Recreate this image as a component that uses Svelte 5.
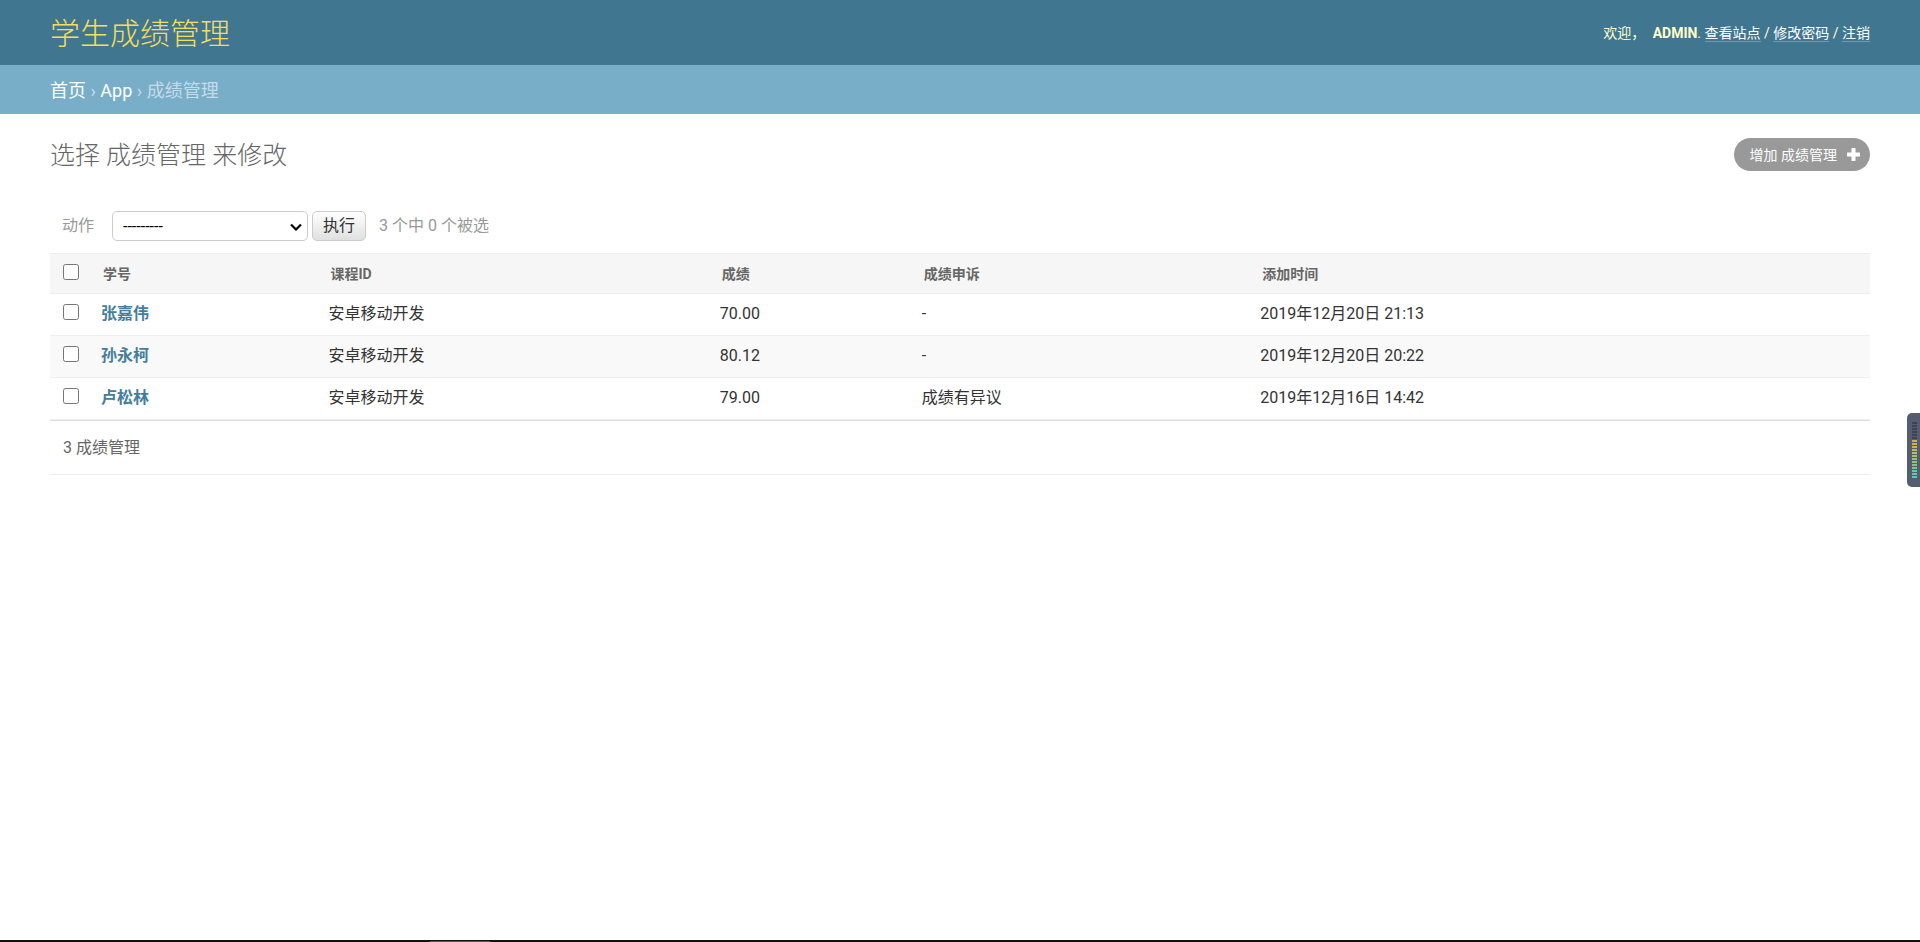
<script>
    const columns = ['学号', '课程ID', '成绩', '成绩申诉', '添加时间'];

    const rows = [
        { name: '张嘉伟', course: '安卓移动开发', score: '70.00', appeal: '-', added: '2019年12月20日 21:13' },
        { name: '孙永柯', course: '安卓移动开发', score: '80.12', appeal: '-', added: '2019年12月20日 20:22' },
        { name: '卢松林', course: '安卓移动开发', score: '79.00', appeal: '成绩有异议', added: '2019年12月16日 14:42' }
    ];

    let checked = $state(rows.map(() => false));
    let selected = $derived(checked.filter(Boolean).length);

    // Level meter, top to bottom
    const levels = [
        '#3d4355', '#3d4355', '#3d4355', '#3d4355', '#3d4355', '#3d4355',
        '#d9ad3c', '#d2b244', '#ccb64a', '#c0bd50', '#b4c256', '#a6c55f', '#98c66b',
        '#8ac776', '#7cc883', '#70c991', '#64caa0', '#58cbb0', '#4fccbd'
    ];

    function toggleAll(event) {
        checked = rows.map(() => event.target.checked);
    }
</script>

<header>
    <h1><a href="#home">学生成绩管理</a></h1>
    <div class="user-tools">
        欢迎，
        <strong>ADMIN</strong>.
        <a href="#site">查看站点</a> /
        <a href="#password">修改密码</a> /
        <a href="#logout">注销</a>
    </div>
</header>

<nav class="breadcrumbs">
    <a href="#home">首页</a> › <a href="#app">App</a> › 成绩管理
</nav>

<main>
    <div class="title-row">
        <h2>选择 成绩管理 来修改</h2>
        <a class="add-link" href="#add">
            增加 成绩管理
            <svg width="13" height="13" viewBox="0 0 13 13" aria-hidden="true">
                <path d="M5 0h3q.5 0 .5.5v4h4q.5 0 .5.5v3q0 .5-.5.5h-4v4q0 .5-.5.5H5q-.5 0-.5-.5v-4h-4Q0 8.500 0 8V5q0-.5.5-.5h4v-4Q4.500 0 5 0z" fill="#fff" />
            </svg>
        </a>
    </div>

    <form onsubmit={(event) => event.preventDefault()}>
        <div class="actions">
            <label for="action">动作</label>
            <div class="select">
                <select id="action">
                    <option value="">---------</option>
                    <option value="delete">删除所选的 成绩管理</option>
                </select>
                <svg width="12" height="8" viewBox="0 0 12 8" aria-hidden="true">
                    <path d="M1 1.500l5 5 5-5" fill="none" stroke="#000" stroke-width="2.200" />
                </svg>
            </div>
            <button type="submit">执行</button>
            <span class="counter">{rows.length} 个中 {selected} 个被选</span>
        </div>

        <table>
            <colgroup>
                <col class="col-check" />
                <col class="col-name" />
                <col class="col-course" />
                <col class="col-score" />
                <col class="col-appeal" />
                <col />
            </colgroup>
            <thead>
                <tr>
                    <th><input type="checkbox" aria-label="全选" onchange={toggleAll} /></th>
                    {#each columns as column}
                        <th scope="col">{column}</th>
                    {/each}
                </tr>
            </thead>
            <tbody>
                {#each rows as row, i}
                    <tr>
                        <td><input type="checkbox" aria-label={row.name} bind:checked={checked[i]} /></td>
                        <th scope="row"><a href="#{i + 1}">{row.name}</a></th>
                        <td>{row.course}</td>
                        <td>{row.score}</td>
                        <td>{row.appeal}</td>
                        <td>{row.added}</td>
                    </tr>
                {/each}
            </tbody>
        </table>

        <p class="paginator">{rows.length} 成绩管理</p>
    </form>
</main>

<!-- Desktop overlays -->
<div class="meter">
    {#each levels as color}
        <span style="background: {color}"></span>
    {/each}
</div>
<div class="edge"><span></span></div>

<style>
    :global(body) {
        margin: 0;
        background: #fff;
        color: #333;
        font-family: Roboto, "Noto Sans CJK SC", sans-serif;
        font-size: 16px;
        line-height: 20px;
    }

    a {
        color: #447e9b;
        text-decoration: none;
    }

    header {
        display: flex;
        justify-content: space-between;
        align-items: center;
        height: 65px;
        padding: 0 50px;
        background: #417690;
        color: #ffc;
    }

    h1 {
        margin: 0;
        padding-top: 2px;
        font-size: 30px;
        line-height: 40px;
        font-weight: 300;
    }

    h1 a {
        color: #f5dd5d;
    }

    .user-tools {
        font-size: 14px;
    }

    .user-tools strong {
        margin-left: 4px;
        font-weight: 700;
    }

    .user-tools a {
        display: inline-block;
        line-height: 16px;
        border-bottom: 1px solid rgba(255, 255, 255, 0.25);
        color: #fff;
    }

    .breadcrumbs {
        padding: 13px 50px 11px;
        background: #79aec8;
        color: #c4dce8;
        font-size: 18px;
        line-height: 25px;
    }

    .breadcrumbs a {
        color: #fff;
    }

    main {
        padding: 24px 50px 0;
    }

    .title-row {
        display: flex;
        justify-content: space-between;
        align-items: center;
        margin-bottom: 28px;
    }

    h2 {
        margin: 0;
        padding-top: 2px;
        color: #666;
        font-size: 25px;
        line-height: 31px;
        font-weight: 300;
    }

    .add-link {
        display: flex;
        align-items: center;
        gap: 10px;
        height: 33px;
        padding: 0 10px 0 16px;
        border-radius: 17px;
        box-sizing: border-box;
        background: #999;
        color: #fff;
        font-size: 14px;
    }

    .actions {
        display: flex;
        align-items: center;
        padding: 12px;
        color: #999;
    }

    .select {
        position: relative;
        width: 196px;
        margin: 0 4px 0 18px;
    }

    /* The arrow lies over the select box */
    .select svg {
        position: absolute;
        top: 12px;
        right: 6px;
        pointer-events: none;
    }

    select {
        display: block;
        appearance: none;
        width: 100%;
        height: 30px;
        padding: 0 10px;
        border: 1px solid #ccc;
        border-radius: 5px;
        background: #fff;
        color: #000;
        font: 16px Roboto, "Noto Sans CJK SC", sans-serif;
    }

    button {
        height: 30px;
        padding: 0 10px;
        border: 1px solid #ccc;
        border-radius: 5px;
        background: linear-gradient(#fff, #e0e0e0);
        color: #333;
        font: 16px/20px Roboto, "Noto Sans CJK SC", sans-serif;
    }

    .counter {
        margin-left: 13px;
    }

    table {
        width: 100%;
        border-collapse: separate;
        border-spacing: 0;
        border-bottom: 1px solid #ddd;
        table-layout: fixed;
    }

    .col-check {
        width: 41px;
    }

    .col-name {
        width: 12.5%;
    }

    .col-course {
        width: 21.5%;
    }

    .col-score {
        width: 11.1%;
    }

    .col-appeal {
        width: 18.6%;
    }

    th,
    td {
        padding: 10px 10px 11px;
        height: 20px;
        border-bottom: 1px solid #eee;
        text-align: left;
        vertical-align: top;
    }

    thead th {
        height: 18px;
        padding: 11px 12px 10px;
        border-top: 1px solid #eee;
        background: #f6f6f6;
        color: #666;
        font-size: 14px;
        line-height: 18px;
    }

    tr > :first-child {
        padding-top: 10px;
        padding-right: 0;
        padding-left: 13px;
    }

    tbody tr:nth-child(even) {
        background: #f9f9f9;
    }

    input {
        display: block;
        width: 16px;
        height: 16px;
        margin: 0;
    }

    .paginator {
        margin: 0;
        padding: 17px 13px 16px;
        border-bottom: 1px solid #eee;
        color: #666;
    }

    .meter {
        position: fixed;
        top: 413px;
        right: 0;
        display: flex;
        flex-direction: column;
        gap: 1px;
        width: 13px;
        height: 74px;
        padding: 9px 3px 0 5px;
        border-radius: 5px 0 0 5px;
        box-sizing: border-box;
        background: #565d71;
    }

    .meter span {
        height: 2px;
    }

    .edge {
        position: fixed;
        right: 0;
        bottom: 0;
        left: 0;
        height: 2px;
        background: #111;
    }

    .edge span {
        display: block;
        width: 60px;
        height: 1px;
        margin: 1px 0 0 430px;
        background: #555;
    }
</style>
